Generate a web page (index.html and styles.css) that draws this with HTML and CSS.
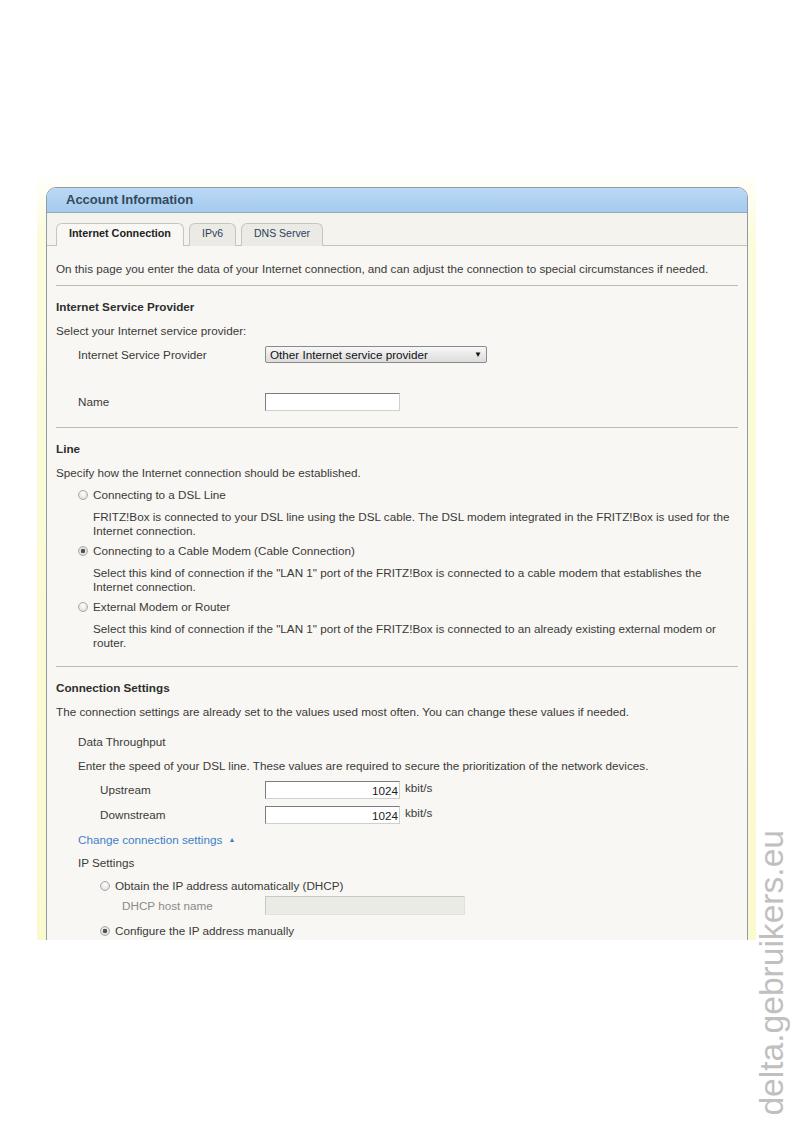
FILE: index.html
```html
<!DOCTYPE html>
<html lang="en">
<head>
    <meta charset="UTF-8">
    <meta name="viewport" content="width=device-width, initial-scale=1.0">
    <title>FRITZ!Box - Account Information</title>
    <link rel="stylesheet" href="styles.css">
</head>
<body>
    <div class="frame">
        <div class="panel">
            <div class="panel-header">Account Information</div>

            <div class="tabs">
                <a class="tab active">Internet Connection</a>
                <a class="tab">IPv6</a>
                <a class="tab">DNS Server</a>
            </div>

            <div class="content">
                <p class="intro">On this page you enter the data of your Internet connection, and can adjust the connection to special circumstances if needed.</p>

                <!-- provider -->
                <div class="section">
                    <h4>Internet Service Provider</h4>
                    <p>Select your Internet service provider:</p>
                    <div class="row first">
                        <label class="row-label">Internet Service Provider</label>
                        <div class="select">
                            <span>Other Internet service provider</span>
                            <span class="arrow">&#9660;</span>
                        </div>
                    </div>
                    <div class="row name-row">
                        <label class="row-label">Name</label>
                        <input type="text" class="field">
                    </div>
                </div>

                <!-- line type -->
                <div class="section">
                    <h4>Line</h4>
                    <p>Specify how the Internet connection should be established.</p>

                    <label class="option">
                        <input type="radio" name="line">
                        Connecting to a DSL Line
                    </label>
                    <p class="option-desc">FRITZ!Box is connected to your DSL line using the DSL cable. The DSL modem integrated in the FRITZ!Box is used for the Internet connection.</p>

                    <label class="option">
                        <input type="radio" name="line" checked>
                        Connecting to a Cable Modem (Cable Connection)
                    </label>
                    <p class="option-desc">Select this kind of connection if the "LAN 1" port of the FRITZ!Box is connected to a cable modem that establishes the Internet connection.</p>

                    <label class="option">
                        <input type="radio" name="line">
                        External Modem or Router
                    </label>
                    <p class="option-desc">Select this kind of connection if the "LAN 1" port of the FRITZ!Box is connected to an already existing external modem or router.</p>
                </div>

                <!-- connection settings -->
                <div class="section">
                    <h4>Connection Settings</h4>
                    <p>The connection settings are already set to the values used most often. You can change these values if needed.</p>

                    <div class="sub">
                        <p class="sub-title">Data Throughput</p>
                        <p>Enter the speed of your DSL line. These values are required to secure the prioritization of the network devices.</p>

                        <div class="row indent up-row">
                            <label class="row-label">Upstream</label>
                            <input type="text" class="field num" value="1024">
                            <span class="unit">kbit/s</span>
                        </div>
                        <div class="row indent down-row">
                            <label class="row-label">Downstream</label>
                            <input type="text" class="field num" value="1024">
                            <span class="unit">kbit/s</span>
                        </div>

                        <a class="toggle">Change connection settings <span class="caret">&#9650;</span></a>

                        <p class="ip-title">IP Settings</p>
                        <label class="option ip-option">
                            <input type="radio" name="ip">
                            Obtain the IP address automatically (DHCP)
                        </label>
                        <div class="row indent-2 dhcp-row">
                            <label class="row-label muted">DHCP host name</label>
                            <input type="text" class="field wide" disabled>
                        </div>
                        <label class="option ip-option manual">
                            <input type="radio" name="ip" checked>
                            Configure the IP address manually
                        </label>
                    </div>
                </div>
            </div>
        </div>
    </div>

    <div class="watermark">delta.gebruikers.eu</div>
</body>
</html>
```

FILE: styles.css
```css
/* FRITZ!Box style settings page */

* {
    box-sizing: border-box;
}

body {
    margin: 0;
    background: #fff;
    font-family: "Liberation Sans", Arial, sans-serif;
    font-size: 11.7px;
    color: #3a3a3a;
}

.frame {
    width: 719px;
    height: 763px;
    margin: 177px 0 0 37px;
    padding: 10px 8px 0 9px;
    overflow: hidden;
    background: linear-gradient(#fffffa 0, #fcfbdc 60px, #fbf9ce 100%);
}

.panel {
    width: 702px;
    border: 1px solid #8f9ca7;
    border-radius: 10px 10px 0 0;
    background: #f8f7f3;
    overflow: hidden;
}

.panel-header {
    height: 25px;
    padding-left: 19px;
    line-height: 24px;
    font-size: 13px;
    font-weight: bold;
    color: #34485d;
    background: linear-gradient(#bad9f5, #a5caed);
    border-bottom: 1px solid #93a9bb;
}

/* tabs */
.tabs {
    display: flex;
    gap: 5px;
    padding: 10px 0 0 9px;
    background: #f4f3ee;
    border-bottom: 1px solid #c4c4bc;
}

.tab {
    height: 23px;
    padding: 0 12px;
    line-height: 19px;
    font-size: 10.5px;
    color: #2a3f5c;
    background: #ebeae4;
    border: 1px solid #c6c6be;
    border-bottom: none;
    border-radius: 6px 6px 0 0;
    margin-bottom: -1px;
}

.tab.active {
    font-size: 10.8px;
    background: #f8f7f3;
    color: #222;
    font-weight: bold;
}

/* content */
.content {
    padding: 16px 9px 0;
}

p, h4 {
    margin: 0;
    line-height: 14px;
}

.intro {
    margin-bottom: 9px;
}

.section {
    border-top: 1px solid #bdbdb5;
    padding: 14px 0 16px;
}

h4 {
    font-size: 11.7px;
    color: #2e2e2e;
    margin-bottom: 10px;
}

/* label / control rows */
.row {
    display: flex;
    align-items: center;
    padding-left: 22px;
}

.row-label {
    flex: 0 0 187px;
    line-height: 14px;
}

.row.indent {
    padding-left: 44px;
}

.row.indent .row-label {
    flex-basis: 165px;
}

.row.indent-2 {
    padding-left: 66px;
}

.row.indent-2 .row-label {
    flex-basis: 143px;
}

.row.first {
    margin-top: 8px;
}

.row.name-row {
    margin-top: 30px;
}

.select {
    position: relative;
    width: 222px;
    height: 17px;
    padding-left: 4px;
    line-height: 15px;
    color: #111;
    border: 1px solid #8a8a8a;
    border-radius: 2px;
    background: linear-gradient(#f7f7f7, #dcdcdc);
}

.select .arrow {
    position: absolute;
    right: 4px;
    top: 0;
    font-size: 8px;
    color: #111;
}

.field {
    width: 135px;
    height: 18px;
    margin: 0;
    padding: 0 1px 0 3px;
    font: inherit;
    color: #1e1e1e;
    background: #fff;
    border: 1px solid;
    border-color: #7c7c7c #cfcfcf #cfcfcf #7c7c7c;
    outline: none;
}

.field.num {
    text-align: right;
}

.field.wide {
    width: 200px;
    height: 19px;
}

.field:disabled {
    background: #ebebe6;
    border-color: #c9c9c3 #e2e2dc #e2e2dc #c9c9c3;
}

.unit {
    align-self: flex-start;
    margin-left: 5px;
    line-height: 13px;
}

.muted {
    color: #8a8a8a;
}

/* radio options */
.option {
    display: flex;
    align-items: center;
    margin: 8px 0 0 22px;
    line-height: 14px;
}

.option input {
    appearance: none;
    -webkit-appearance: none;
    width: 10px;
    height: 10px;
    margin: 0 5px 0 0;
    border: 1px solid #a8a8a8;
    border-radius: 50%;
    background: radial-gradient(circle at 50% 35%, #ffffff, #d6d6d6);
}

.option input:checked {
    background: radial-gradient(circle, #4a4a4a 0, #5a5a5a 2px, #e8e8e8 2.6px, #d0d0d0 100%);
}

.option-desc {
    margin: 8px 0 0 37px;
}

.option-desc + .option {
    margin-top: 6px;
}

/* connection settings */
.sub {
    padding-left: 22px;
}

.sub-title {
    margin-top: 16px;
    margin-bottom: 10px;
}

.sub .row {
    padding-left: 22px;
}

.sub .row.indent-2 {
    padding-left: 44px;
}

.up-row {
    margin-top: 8px;
}

.down-row {
    margin-top: 7px;
}

.toggle {
    display: block;
    margin-top: 9px;
    line-height: 14px;
    color: #3d7fc6;
}

.toggle .caret {
    font-size: 7px;
    vertical-align: 2px;
    margin-left: 3px;
}

.ip-title {
    margin-top: 9px;
}

.ip-option {
    margin: 9px 0 0 22px;
}

.dhcp-row {
    margin-top: 3px;
}

.ip-option.manual {
    margin-top: 9px;
}

/* site watermark down the right edge */
.watermark {
    position: absolute;
    left: 753px;
    top: 830px;
    writing-mode: vertical-rl;
    transform: rotate(180deg);
    font-family: "Liberation Sans", Arial, sans-serif;
    font-size: 33.6px;
    line-height: 37px;
    color: #c0c0c0;
}
```
